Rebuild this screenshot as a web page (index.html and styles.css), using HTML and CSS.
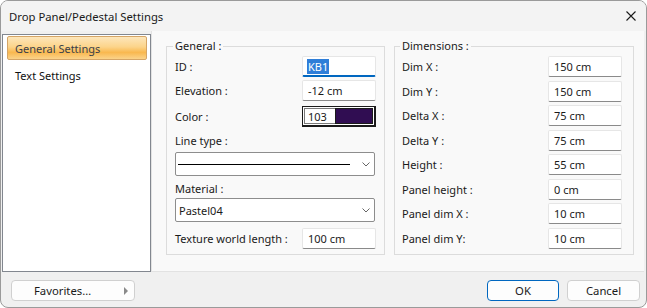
FILE: index.html
```html
<!DOCTYPE html>
<html lang="en">
<head>
  <meta charset="UTF-8" />
  <title>Drop Panel/Pedestal Settings</title>
  <link rel="stylesheet" href="styles.css">
</head>
<body>
  <div class="window">
    <div class="titlebar">
      <span class="title">Drop Panel/Pedestal Settings</span>
      <svg class="close" width="10" height="10" viewBox="0 0 10 10">
        <path d="M0.5 0.5 L9.5 9.5 M9.5 0.5 L0.5 9.5" stroke="#1a1a1a" stroke-width="1.1" fill="none"/>
      </svg>
    </div>

    <div class="content">
      <div class="nav">
        <div class="nav-item active">General Settings</div>
        <div class="nav-item">Text Settings</div>
      </div>

      <div class="panes">
        <fieldset class="group general">
          <legend>General :</legend>
          <div class="row r-id">
            <label>ID :</label>
            <div class="field focus"><span class="sel">KB1</span></div>
          </div>
          <div class="row r-elev">
            <label>Elevation :</label>
            <div class="field">-12 cm</div>
          </div>
          <div class="row r-color">
            <label>Color :</label>
            <div class="color">
              <span class="color-num">103</span>
              <span class="swatch"></span>
            </div>
          </div>
          <div class="caption c-line">Line type :</div>
          <div class="select s-line">
            <span class="line"></span>
            <svg class="chev" width="8" height="5" viewBox="0 0 8 5"><path d="M0.5 0.5 L4 4 L7.5 0.5" stroke="#666" fill="none"/></svg>
          </div>
          <div class="caption c-mat">Material :</div>
          <div class="select s-mat">
            <span class="val">Pastel04</span>
            <svg class="chev" width="8" height="5" viewBox="0 0 8 5"><path d="M0.5 0.5 L4 4 L7.5 0.5" stroke="#666" fill="none"/></svg>
          </div>
          <div class="row r-tex">
            <label>Texture world length :</label>
            <div class="field">100 cm</div>
          </div>
        </fieldset>

        <fieldset class="group dims">
          <legend>Dimensions :</legend>
          <div class="grid">
            <label>Dim X :</label><div class="field">150 cm</div>
            <label>Dim Y :</label><div class="field">150 cm</div>
            <label>Delta X :</label><div class="field">75 cm</div>
            <label>Delta Y :</label><div class="field">75 cm</div>
            <label>Height :</label><div class="field">55 cm</div>
            <label>Panel height :</label><div class="field">0 cm</div>
            <label>Panel dim X :</label><div class="field">10 cm</div>
            <label>Panel dim Y:</label><div class="field">10 cm</div>
          </div>
        </fieldset>
      </div>
    </div>

    <div class="footer">
      <button class="btn fav">Favorites…<span class="tri"></span></button>
      <div class="actions">
        <button class="btn ok">OK</button>
        <button class="btn cancel">Cancel</button>
      </div>
    </div>
  </div>
</body>
</html>
```

FILE: styles.css
```css
:root {
  --frame: #f0f0f0;
  --pane: #f9f9f9;
  --line: #dcdcdc;
  --text: #1a1a1a;
}
* { box-sizing: border-box; }
html, body { margin: 0; background: #fff; }
body {
  font-family: "Noto Sans", "Open Sans", sans-serif;
  font-size: 11.3px; color: var(--text);
}
.window {
  width: 647px; height: 308px;
  border: 1px solid #9a9a9a; border-radius: 8px;
  background: var(--frame);
  display: flex; flex-direction: column; overflow: hidden;
}
.titlebar {
  height: 30px; flex: none;
  display: flex; align-items: center; justify-content: space-between;
  padding: 0 10px 0 8px;
  background: #f3f3f3;
}
.title { font-size: 11.3px; }
.close { display: block; }

.content { height: 241px; flex: none; display: flex; }
.nav {
  width: 149px; margin: 3px 0 0 1px;
  height: 238px;
  background: #fff; border: 1px solid #82878f;
  padding: 1px 3px 0 4px;
  font-size: 11px;
}
.nav-item {
  height: 24px; line-height: 23px;
  padding-left: 7px; margin-bottom: 3px;
  border: 1px solid transparent; color: #111;
}
.nav-item.active {
  color: #3a3f4a;
  border-color: #d5a566;
  background: linear-gradient(#fde6bb, #fcd48a 45%, #f9b84f 70%, #fbd38a);
  border-radius: 2px;
}

.panes {
  flex: 1; margin-right: 2px;
  background: var(--pane);
  border-left: 1px solid #e2e2e2; border-bottom: 1px solid #e2e2e2;
  display: flex; gap: 9px;
  padding: 7px 0 0 14px;
}
.group {
  margin: 0; height: 217px;
  border: 1px solid var(--line);
  padding: 2px 8px 0 8px;
  font-size: 11px;
}
.group legend {
  padding: 0 2px; margin-left: -2px;
  line-height: 16px; font-size: 11px;
}
.general { width: 219px; }
.dims { width: 240px; padding: 2px 11px 0 7px; }

.row {
  display: flex; justify-content: space-between; align-items: center;
  height: 21px;
}
.r-elev { margin-top: 3px; }
.r-color { margin-top: 5px; }
.r-tex { margin-top: 6px; }
.caption { height: 16px; line-height: 16px; }
.c-line { margin-top: 6px; }
.c-mat { margin-top: 5px; }

.field {
  width: 74px; height: 21px;
  background: #fff;
  border: 1px solid #e6e6e6; border-bottom-color: #8a8a8a;
  border-radius: 2px;
  padding: 0 0 0 5px; line-height: 19px;
  font-size: 11px;
}
.field.focus { border-bottom: 2px solid #0067c0; padding-left: 4px; }
.sel { background: #2f7ed8; color: #fff; padding: 0 1px; }

.color {
  width: 74px; height: 21px; display: flex;
  border: 1px solid #1a1a1a; border-width: 1px 2px 2px 1px;
  padding: 1px;
  background: #fff;
}
.color-num {
  width: 31px; border: 1px solid #7a7a7a; border-right: none;
  line-height: 15px; padding-left: 3px;
}
.swatch { flex: 1; background: #300d52; border: 1px solid #1a1a1a; }

.select {
  width: 200px; height: 24px; margin-top: 3px;
  background: #fff; border: 1px solid #8d8d8d; border-radius: 2px;
  display: flex; align-items: center; justify-content: space-between;
  padding: 0 4px 0 2px;
}
.s-mat { margin-top: 1px; }
.select .line { width: 172px; height: 1px; background: #000; }
.select .val { padding-left: 1px; }
.chev { display: block; margin-top: 1px; }

.grid {
  display: grid; grid-template-columns: 1fr 74px;
  grid-auto-rows: 21px; row-gap: 3.5px; align-items: center;
}

.footer {
  flex: 1; display: flex; justify-content: space-between;
  padding: 8px 6px 0 10px;
}
.btn {
  font-family: inherit; font-size: 11.3px; color: var(--text);
  height: 21px; padding: 0;
  background: #fdfdfd; border: 1px solid #d0d0d0; border-radius: 4px;
}
.fav {
  width: 124px; text-align: left; padding-left: 22px;
  display: flex; align-items: center; justify-content: space-between;
  padding-right: 6px;
}
.tri {
  width: 0; height: 0;
  border-left: 4px solid #8a8a8a;
  border-top: 4px solid transparent; border-bottom: 4px solid transparent;
}
.actions { display: flex; gap: 8px; }
.ok { width: 72px; border-color: #0067c0; }
.cancel { width: 73px; }
```
